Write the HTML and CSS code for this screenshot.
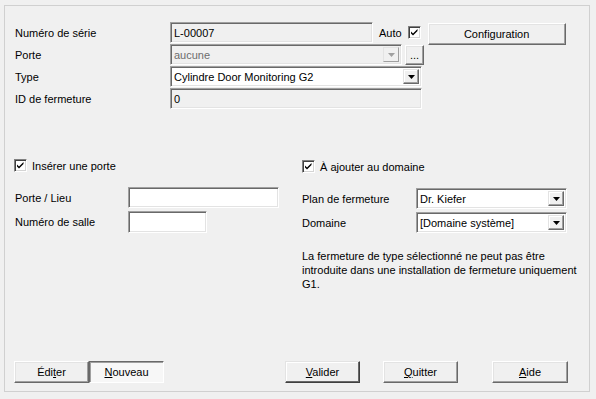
FILE: index.html
```html
<!DOCTYPE html>
<html lang="fr">
<head>
    <meta charset="UTF-8">
    <title>Fermeture</title>
    <link rel="stylesheet" href="styles.css">
</head>
<body>
    <div class="dialog">
        <div class="general">
            <div class="row">
                <span class="row-label">Numéro de série</span>
                <div class="field readonly serial-field">L-00007</div>
                <span class="auto-label">Auto</span>
                <span class="checkbox">
                    <svg width="11" height="11" viewBox="0 0 11 11"><path d="M2 4.5 L4 6.5 L8.5 2 L8.5 4 L4 8.5 L2 6.5 Z" fill="#000"/></svg>
                </span>
                <button type="button" class="btn btn-config">Configuration</button>
            </div>
            <div class="row">
                <span class="row-label">Porte</span>
                <div class="field combo disabled door-combo">
                    <span>aucune</span>
                    <span class="combo-arrow"><svg width="7" height="4" viewBox="0 0 7 4"><path d="M0 0 H7 L3.5 4 Z"/></svg></span>
                </div>
                <button type="button" class="btn btn-browse">...</button>
            </div>
            <div class="row">
                <span class="row-label">Type</span>
                <div class="field combo wide-field">
                    <span>Cylindre Door Monitoring G2</span>
                    <span class="combo-arrow"><svg width="7" height="4" viewBox="0 0 7 4"><path d="M0 0 H7 L3.5 4 Z"/></svg></span>
                </div>
            </div>
            <div class="row">
                <span class="row-label">ID de fermeture</span>
                <div class="field readonly wide-field">0</div>
            </div>
        </div>

        <div class="sections">
            <div class="col-left">
                <label class="check-row">
                    <span class="checkbox">
                        <svg width="11" height="11" viewBox="0 0 11 11"><path d="M2 4.5 L4 6.5 L8.5 2 L8.5 4 L4 8.5 L2 6.5 Z" fill="#000"/></svg>
                    </span>
                    Insérer une porte
                </label>
                <div class="form-row">
                    <span class="left-label">Porte / Lieu</span>
                    <div class="field place-field"></div>
                </div>
                <div class="form-row">
                    <span class="left-label">Numéro de salle</span>
                    <div class="field room-field"></div>
                </div>
            </div>
            <div class="col-right">
                <label class="check-row">
                    <span class="checkbox">
                        <svg width="11" height="11" viewBox="0 0 11 11"><path d="M2 4.5 L4 6.5 L8.5 2 L8.5 4 L4 8.5 L2 6.5 Z" fill="#000"/></svg>
                    </span>
                    À ajouter au domaine
                </label>
                <div class="form-row">
                    <span class="right-label">Plan de fermeture</span>
                    <div class="field combo domain-combo">
                        <span>Dr. Kiefer</span>
                        <span class="combo-arrow"><svg width="7" height="4" viewBox="0 0 7 4"><path d="M0 0 H7 L3.5 4 Z"/></svg></span>
                    </div>
                </div>
                <div class="form-row">
                    <span class="right-label">Domaine</span>
                    <div class="field combo domain-combo">
                        <span>[Domaine système]</span>
                        <span class="combo-arrow"><svg width="7" height="4" viewBox="0 0 7 4"><path d="M0 0 H7 L3.5 4 Z"/></svg></span>
                    </div>
                </div>
                <p class="message">La fermeture de type sélectionné ne peut pas être introduite dans une installation de fermeture uniquement G1.</p>
            </div>
        </div>

        <div class="footer">
            <button type="button" class="btn btn-edit">Édi<u>t</u>er</button>
            <button type="button" class="btn pressed"><u>N</u>ouveau</button>
            <button type="button" class="btn default btn-ok"><u>V</u>alider</button>
            <button type="button" class="btn btn-quit"><u>Q</u>uitter</button>
            <button type="button" class="btn btn-help"><u>A</u>ide</button>
        </div>
    </div>
</body>
</html>
```

FILE: styles.css
```css
* {
    box-sizing: border-box;
}

body {
    margin: 0;
    background-color: #F0F0F0;
    font-family: 'Liberation Sans', Arial, sans-serif;
    font-size: 11px;
    color: #000000;
}

.dialog {
    margin: 5px 0 0 4px;
    width: 586px;
    height: 387px;
    border: 1px solid #D0D0D0;
    padding: 16px 0 0 10px;
    display: flex;
    flex-direction: column;
}

/* top block */
.row {
    display: flex;
    align-items: center;
    height: 21px;
    margin-bottom: 1px;
}

.row-label {
    width: 155px;
}

.field {
    height: 21px;
    padding: 0 3px;
    display: flex;
    align-items: center;
    background-color: #FFFFFF;
    border: 1px solid;
    border-color: #A0A0A0 #FFFFFF #FFFFFF #A0A0A0;
    box-shadow: inset 1px 1px #696969, inset -1px -1px #E3E3E3;
    white-space: nowrap;
}

.field.readonly {
    background-color: #F0F0F0;
}

.serial-field {
    width: 203px;
}

.wide-field {
    width: 252px;
}

.door-combo {
    width: 232px;
}

.combo {
    justify-content: space-between;
    padding-right: 2px;
}

.combo-arrow {
    width: 16px;
    height: 15px;
    display: flex;
    align-items: center;
    justify-content: center;
    background-color: #F0F0F0;
    border: 1px solid;
    border-color: #E3E3E3 #696969 #696969 #E3E3E3;
    box-shadow: inset -1px -1px #A0A0A0, inset 1px 1px #FFFFFF;
}

.combo-arrow svg {
    fill: #000000;
}

.combo.disabled {
    background-color: #F0F0F0;
    color: #6D6D6D;
}

.combo.disabled .combo-arrow {
    border-color: #E3E3E3 #A0A0A0 #A0A0A0 #E3E3E3;
    box-shadow: none;
}

.combo.disabled .combo-arrow svg {
    fill: #A0A0A0;
}

.auto-label {
    margin-left: 6px;
}

.checkbox {
    width: 13px;
    height: 13px;
    display: inline-flex;
    align-items: center;
    justify-content: center;
    background-color: #FFFFFF;
    border: 1px solid;
    border-color: #808080 #FFFFFF #FFFFFF #808080;
    box-shadow: inset 1px 1px #404040, inset -1px -1px #D4D4D4;
    flex-shrink: 0;
}

.row .checkbox {
    margin-left: 6px;
}

/* buttons */
.btn {
    width: 75px;
    height: 22px;
    padding: 0;
    font: inherit;
    color: #000000;
    background-color: #F0F0F0;
    border: 1px solid;
    border-color: #FFFFFF #696969 #696969 #FFFFFF;
    box-shadow: inset -1px -1px #A0A0A0, inset 1px 1px #E3E3E3;
}

.btn-config {
    width: 138px;
    margin-left: 7px;
    align-self: flex-start;
    margin-top: 1px;
}

.btn-browse {
    width: 19px;
    height: 20px;
    margin-left: 3px;
    line-height: 12px;
}

.btn.pressed {
    background-color: #F7F7F7;
    border-color: #696969 #FFFFFF #FFFFFF #696969;
    box-shadow: inset 1px 1px #A0A0A0;
}

.btn.default {
    border-color: #E3E3E3 #404040 #404040 #E3E3E3;
    box-shadow: inset -1px -1px #696969, inset 1px 1px #FFFFFF;
}

/* middle block */
.sections {
    display: flex;
    margin-top: 49px;
}

.col-left {
    width: 287px;
}

.col-right {
    flex: 1;
}

.check-row {
    display: flex;
    align-items: center;
    gap: 5px;
    height: 13px;
}

.col-left .check-row {
    margin-left: -1px;
}

.col-right .check-row {
    margin-top: 1px;
}

.form-row {
    display: flex;
    align-items: center;
    margin-top: 3px;
}

.check-row + .form-row {
    margin-top: 15px;
}

.left-label {
    width: 113px;
}

.right-label {
    width: 114px;
}

.place-field {
    width: 151px;
}

.room-field {
    width: 79px;
    height: 22px;
}

.domain-combo {
    width: 151px;
}

.message {
    margin: 16px 0 0;
    width: 282px;
    line-height: 14px;
}

/* bottom buttons */
.footer {
    margin-top: auto;
    padding-bottom: 8px;
    display: flex;
}

.btn-edit {
    margin-left: -1px;
}

.btn-ok {
    margin-left: 121px;
}

.btn-quit {
    margin-left: 23px;
}

.btn-help {
    margin-left: 34px;
    width: 76px;
}
```
